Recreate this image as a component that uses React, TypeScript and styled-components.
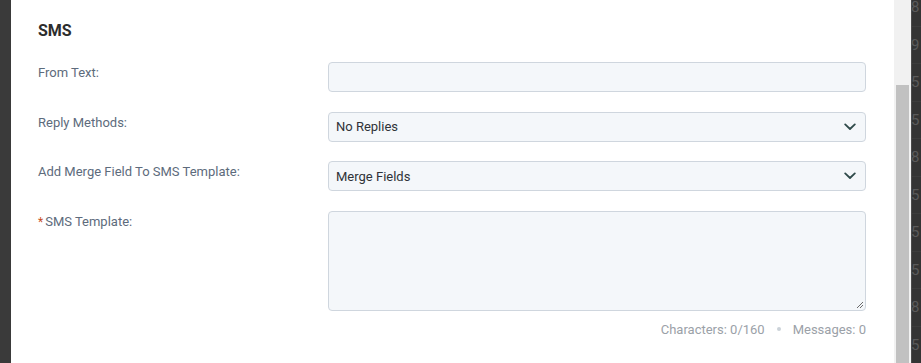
import { createGlobalStyle, styled } from 'styled-components';

const GlobalStyle = createGlobalStyle`
  html, body {
    margin: 0;
    padding: 0;
    height: 100%;
    overflow: hidden;
    font-family: Roboto, "Liberation Sans", Arial, sans-serif;
  }
  #root {
    height: 100%;
  }
`;

const Screen = styled.div`
  display: flex;
  height: 363px;
  width: 921px;
  background: #3a3a3a;
`;

const Backdrop = styled.div`
  width: 11px;
  flex-shrink: 0;
  background: #3a3a3a;
`;

const Modal = styled.div`
  width: 883px;
  flex-shrink: 0;
  background: #ffffff;
  padding: 21px 28px 0 27px;
  box-sizing: border-box;
`;

const Scrollbar = styled.div`
  width: 17px;
  flex-shrink: 0;
  background: #f1f1f1;
  display: flex;
  flex-direction: column;
  align-items: center;
`;

const ScrollThumb = styled.div`
  margin-top: 85px;
  width: 13px;
  flex: 1;
  background: #c1c1c1;
`;

const PeekColumn = styled.div`
  width: 10px;
  flex-shrink: 0;
  overflow: hidden;
  background: #343434;
  border-left: 1px solid #4a4a4a;
  box-sizing: border-box;
  display: flex;
  flex-direction: column;
  margin-top: -11px;
`;

const PeekCell = styled.div`
  height: 37.5px;
  flex-shrink: 0;
  display: flex;
  align-items: center;
  border-bottom: 1px solid #3c3c3c;
  box-sizing: border-box;
  color: #5a5a5a;
  font-size: 15px;
  text-indent: -1px;
  white-space: nowrap;
`;

const Heading = styled.h3`
  margin: 0 0 21px;
  font-size: 16px;
  font-weight: 700;
  color: #2d2d2d;
  line-height: 20px;
`;

const Form = styled.div`
  display: flex;
  flex-direction: column;
  gap: 19.5px;
`;

const Row = styled.div`
  display: grid;
  grid-template-columns: 290px minmax(0, 1fr);
  align-items: start;
`;

const Label = styled.label`
  font-size: 13px;
  line-height: 18px;
  padding-top: 2px;
  color: #5d6b7c;
`;

const Required = styled.span`
  color: #c8501f;
  font-size: 12px;
  margin-right: 2px;
`;

const fieldBase = `
  box-sizing: border-box;
  width: 100%;
  background: #f4f7fa;
  border: 1px solid #cfd6de;
  border-radius: 4px;
  font-family: Roboto, "Liberation Sans", Arial, sans-serif;
  font-size: 13px;
  color: #2f3338;
`;

const TextInput = styled.div`
  ${fieldBase}
  height: 30px;
`;

const Select = styled.div`
  ${fieldBase}
  height: 30px;
  display: flex;
  align-items: center;
  justify-content: space-between;
  padding: 0 9px 0 7px;
`;

const TextArea = styled.div`
  ${fieldBase}
  height: 100px;
  position: relative;
`;

const ResizeGrip = styled.svg`
  position: absolute;
  right: 1px;
  bottom: 1px;
`;

const Counter = styled.div`
  display: flex;
  justify-content: flex-end;
  align-items: center;
  gap: 10px;
  margin-top: 11px;
  font-size: 13px;
  color: #9ba1a8;
  white-space: nowrap;
`;

const Dot = styled.span`
  width: 4px;
  height: 4px;
  border-radius: 50%;
  background: #cbd2d9;
  margin: 0 2px;
`;

const Chevron = () => (
  <svg width="12" height="8" viewBox="0 0 12 8" fill="none">
    <path d="M1.2 1.4 L6 6 L10.8 1.4" stroke="#2f4a4a" strokeWidth="1.8" strokeLinecap="round" strokeLinejoin="round" />
  </svg>
);

const peekDigits = ['8', '9', '5', '5', '8', '5', '5', '5', '8', '5'];

export default function App() {
  return (
    <>
      <GlobalStyle />
      <Screen>
        <Backdrop />
        <Modal>
          <Heading>SMS</Heading>
          <Form>
            <Row>
              <Label>From Text:</Label>
              <TextInput />
            </Row>
            <Row>
              <Label>Reply Methods:</Label>
              <Select>
                <span>No Replies</span>
                <Chevron />
              </Select>
            </Row>
            <Row>
              <Label>Add Merge Field To SMS Template:</Label>
              <Select>
                <span>Merge Fields</span>
                <Chevron />
              </Select>
            </Row>
            <Row>
              <Label>
                <Required>*</Required>SMS Template:
              </Label>
              <div>
                <TextArea>
                  <ResizeGrip width="9" height="9" viewBox="0 0 9 9">
                    <path d="M8 2 L2 8 M8 5 L5 8" stroke="#6b6b6b" strokeWidth="1" />
                  </ResizeGrip>
                </TextArea>
                <Counter>
                  <span>Characters: 0/160</span>
                  <Dot />
                  <span>Messages: 0</span>
                </Counter>
              </div>
            </Row>
          </Form>
        </Modal>
        <Scrollbar>
          <ScrollThumb />
        </Scrollbar>
        <PeekColumn>
          {peekDigits.map((d, i) => (
            <PeekCell key={i}>{d}</PeekCell>
          ))}
        </PeekColumn>
      </Screen>
    </>
  );
}
